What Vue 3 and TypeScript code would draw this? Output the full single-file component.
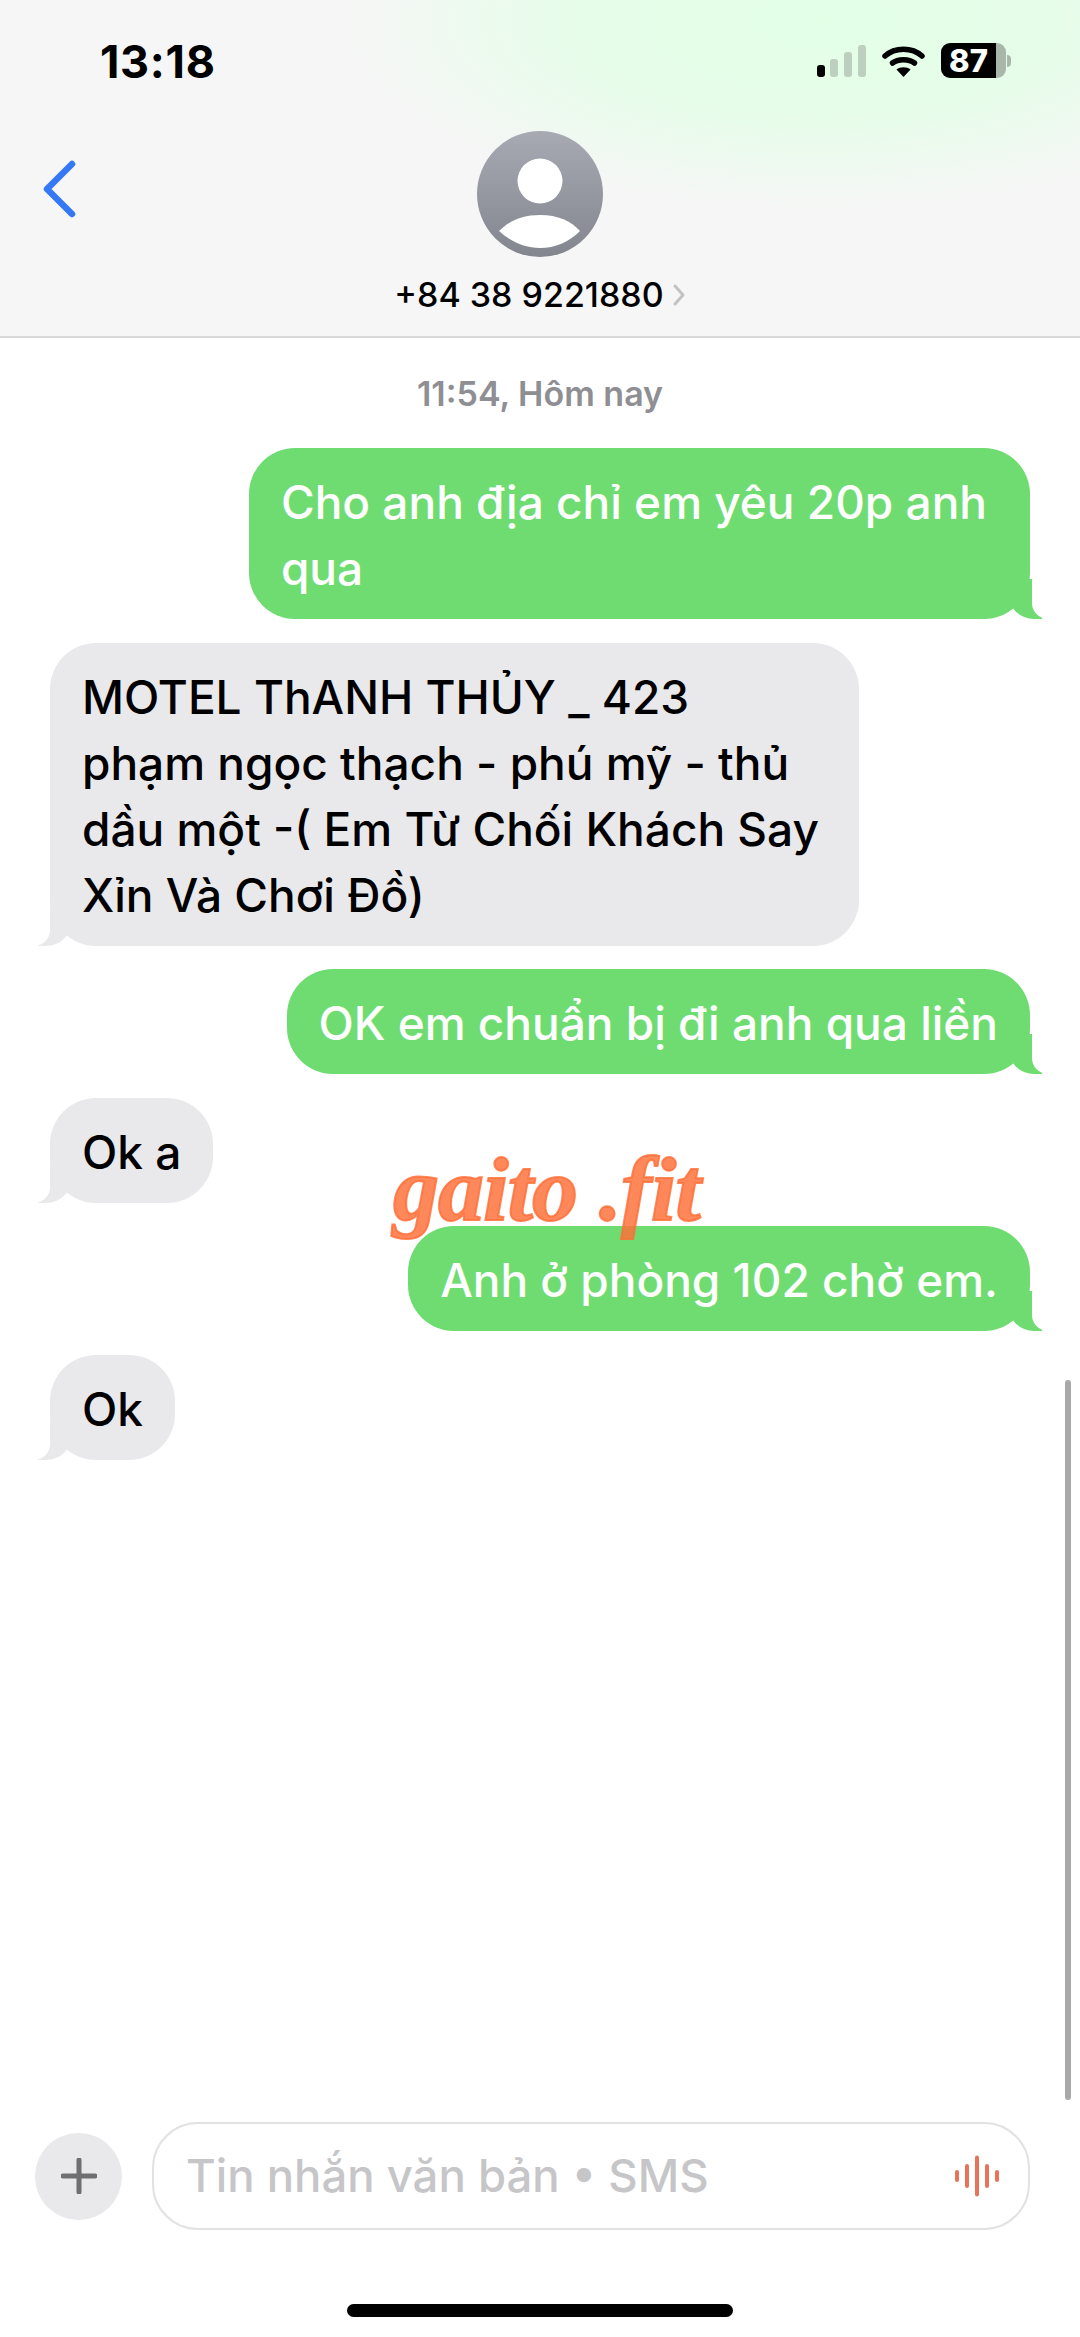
<script setup lang="ts">
interface Msg {
  id: number
  text: string
  mine: boolean
  extra?: string
}

const messages: Msg[] = [
  { id: 1, text: 'Cho anh địa chỉ em yêu 20p anh\nqua', mine: true, extra: 'roomy' },
  { id: 2, text: 'MOTEL ThANH THỦY _ 423\nphạm ngọc thạch - phú mỹ - thủ\ndầu một -( Em Từ Chối Khách Say\nXỉn Và Chơi Đồ)', mine: false, extra: 'snug' },
  { id: 3, text: 'OK em chuẩn bị đi anh qua liền', mine: true },
  { id: 4, text: 'Ok a', mine: false },
  { id: 5, text: 'Anh ở phòng 102 chờ em.', mine: true },
  { id: 6, text: 'Ok', mine: false },
]

const waveBars = [
  { x: 0, h: 12 },
  { x: 10, h: 24 },
  { x: 20, h: 41 },
  { x: 30, h: 24 },
  { x: 40, h: 12 },
]
</script>

<template>
  <div class="phone">
    <header class="top">
      <div class="status">
        <span class="clock">13:18</span>
        <div class="status-icons">
          <svg class="signal" width="49" height="32" viewBox="0 0 49 32">
            <rect x="0" y="20" width="8" height="12" rx="3" fill="#000" />
            <rect x="13" y="14" width="8" height="18" rx="3" fill="#bdd0c0" />
            <rect x="27" y="7" width="8" height="25" rx="3" fill="#bdd0c0" />
            <rect x="41" y="0" width="8" height="32" rx="3" fill="#bdd0c0" />
          </svg>
          <svg class="wifi" width="43" height="32" viewBox="0 0 43 32">
            <path d="M3 11 C13 2 30 2 40 11" fill="none" stroke="#000" stroke-width="5.5" stroke-linecap="round" />
            <path d="M10.5 18 C16 13.5 27 13.5 32.5 18" fill="none" stroke="#000" stroke-width="5.5" stroke-linecap="round" />
            <path d="M14.5 24.5 C18 21.5 25 21.5 28.5 24.5 L21.5 32 Z" fill="#000" />
          </svg>
          <div class="battery">
            <div class="battery-body"><span>87</span></div>
            <i class="battery-nub"></i>
          </div>
        </div>
      </div>
      <div class="contact">
        <svg class="back" width="34" height="58" viewBox="0 0 34 58">
          <path d="M30 4 L5 29 L30 54" fill="none" stroke="#3478f6" stroke-width="6.5" stroke-linecap="round" stroke-linejoin="round" />
        </svg>
        <div class="who">
          <svg class="avatar" width="126" height="126" viewBox="0 0 126 126">
            <defs>
              <linearGradient id="avatarFill" x1="0" y1="0" x2="0" y2="1">
                <stop offset="0" stop-color="#a7aab3" />
                <stop offset="1" stop-color="#84868f" />
              </linearGradient>
            </defs>
            <circle cx="63" cy="63" r="63" fill="url(#avatarFill)" />
            <circle cx="63" cy="50" r="22.5" fill="#fff" />
            <path d="M22 100 C32 90 45 84 63 84 C81 84 94 90 103 100 C92 111 78 117 63 117 C48 117 34 111 22 100 Z" fill="#fff" />
          </svg>
          <div class="number">
            +84 38 9221880
            <svg width="14" height="24" viewBox="0 0 14 24">
              <path d="M3 3 L11 12 L3 21" fill="none" stroke="#c2c2c4" stroke-width="3" stroke-linecap="round" stroke-linejoin="round" />
            </svg>
          </div>
        </div>
      </div>
    </header>

    <main class="thread">
      <div class="stamp">11:54, Hôm nay</div>
      <div
        v-for="m in messages"
        :key="m.id"
        class="bubble"
        :class="[m.mine ? 'mine' : 'theirs', m.extra]"
      >{{ m.text }}</div>
      <div class="watermark">gaito .fit</div>
      <i class="scrollbar"></i>
    </main>

    <footer class="composer">
      <button class="plus" type="button">
        <svg width="36" height="36" viewBox="0 0 36 36">
          <path d="M18 2 V34 M2 18 H34" stroke="#6e6e73" stroke-width="5" stroke-linecap="round" />
        </svg>
      </button>
      <div class="field">
        <span class="placeholder">Tin nhắn văn bản • SMS</span>
        <svg class="wave" width="46" height="42" viewBox="0 0 46 42">
          <rect
            v-for="b in waveBars"
            :key="b.x"
            :x="b.x + 1"
            :y="21 - b.h / 2"
            width="4"
            :height="b.h"
            rx="2"
            fill="#e8735a"
          />
        </svg>
      </div>
    </footer>

    <div class="home-wrap"><i class="home"></i></div>
  </div>
</template>

<style>
html, body { margin: 0; background: #fff; }
</style>

<style scoped>
.phone { width: 1080px; height: 2337px; display: flex; flex-direction: column; background: #fff; overflow: hidden; font-family: Inter, "Noto Sans", "Liberation Sans", sans-serif; color: #000 }

.top { height: 338px; box-sizing: border-box; border-bottom: 2px solid #d9d9d9; background: radial-gradient(ellipse 480px 190px at 820px 20px, #e3ffe6 0%, #e6fde9 50%, rgba(246,246,246,0) 100%), #f6f6f6 }
.status { height: 122px; box-sizing: border-box; padding: 41px 69px 0 100px; display: flex; justify-content: space-between; align-items: flex-start }
.clock { font-size: 45px; line-height: 42px; font-weight: 700; letter-spacing: 0.7px }
.status-icons { display: flex; align-items: center; gap: 16px; margin-top: 2px }
.battery { display: flex; align-items: center; gap: 1px }
.battery-body { width: 65px; height: 35px; border-radius: 9px; overflow: hidden; display: flex; align-items: center; background: linear-gradient(90deg, #000 0 85%, #a9b6aa 85% 100%) }
.battery-body span { width: 55px; text-align: center; color: #fff; font-size: 31px; font-weight: 800; line-height: 35px }
.battery-nub { width: 4px; height: 12px; background: #a9b6aa; border-radius: 0 4px 4px 0 }

.contact { display: grid; grid-template-columns: 1fr auto 1fr; padding-top: 9px }
.back { margin: 29px 0 0 42px }
.who { display: flex; flex-direction: column; align-items: center; grid-column: 2 }
.avatar { display: block }
.number { margin-top: 18px; display: flex; align-items: center; gap: 8px; font-size: 34px; line-height: 40px; font-weight: 500; white-space: nowrap }

.thread { flex: 1; position: relative; display: flex; flex-direction: column; align-items: flex-start; gap: 23.5px; padding: 0 50px; min-height: 0 }
.stamp { align-self: center; margin-top: 38px; margin-bottom: 12.5px; font-size: 34px; line-height: 36px; font-weight: 600; color: #8e8e93 }
.bubble { position: relative; box-sizing: border-box; padding: 21px 32px 18px; font-size: 46px; line-height: 66px; font-weight: 500; white-space: pre-line; border-radius: 46px; z-index: 0 }
.bubble::before, .bubble::after { content: ''; position: absolute; bottom: 0; z-index: -1 }
.roomy { padding-right: 43px }
.snug { padding-right: 40px }
.mine { align-self: flex-end; background: #6fdc72; color: #fff }
.mine::before { right: -12px; width: 34px; height: 40px; background: #6fdc72; border-bottom-left-radius: 26px }
.mine::after { right: -26px; width: 24px; height: 42px; background: #fff; border-bottom-left-radius: 16px }
.theirs { background: #e9e9eb }
.theirs::before { left: -12px; width: 34px; height: 40px; background: #e9e9eb; border-bottom-right-radius: 26px }
.theirs::after { left: -24px; width: 24px; height: 42px; background: #fff; border-bottom-right-radius: 16px }

.watermark { position: absolute; left: 393px; top: 796px; font-family: "Liberation Serif", "DejaVu Serif", serif; font-style: italic; font-weight: 700; font-size: 92px; line-height: 110px; letter-spacing: -1px; -webkit-text-stroke: 2px rgba(255, 110, 55, 0.82); color: rgba(255, 110, 55, 0.82); white-space: nowrap; z-index: 2 }
.scrollbar { position: absolute; right: 9px; top: 1042px; width: 6px; height: 720px; border-radius: 3px; background: #a9a9a9 }

.composer { display: flex; align-items: center; gap: 30px; padding: 0 50px 0 35px; height: 108px }
.plus { width: 87px; height: 87px; flex: none; padding: 0; border: none; border-radius: 50%; background: #e9e9eb; display: flex; align-items: center; justify-content: center }
.field { flex: 1; height: 108px; box-sizing: border-box; border: 2px solid #e2e2e4; border-radius: 46px; display: flex; align-items: center; justify-content: space-between; padding: 0 28px 0 32px }
.placeholder { font-size: 45.5px; line-height: 56px; font-weight: 500; color: #c6c6c8; white-space: nowrap }

.home-wrap { height: 107px; display: flex; justify-content: center; align-items: flex-start; padding-top: 74px; box-sizing: border-box }
.home { display: block; width: 386px; height: 13px; border-radius: 7px; background: #000 }
</style>
